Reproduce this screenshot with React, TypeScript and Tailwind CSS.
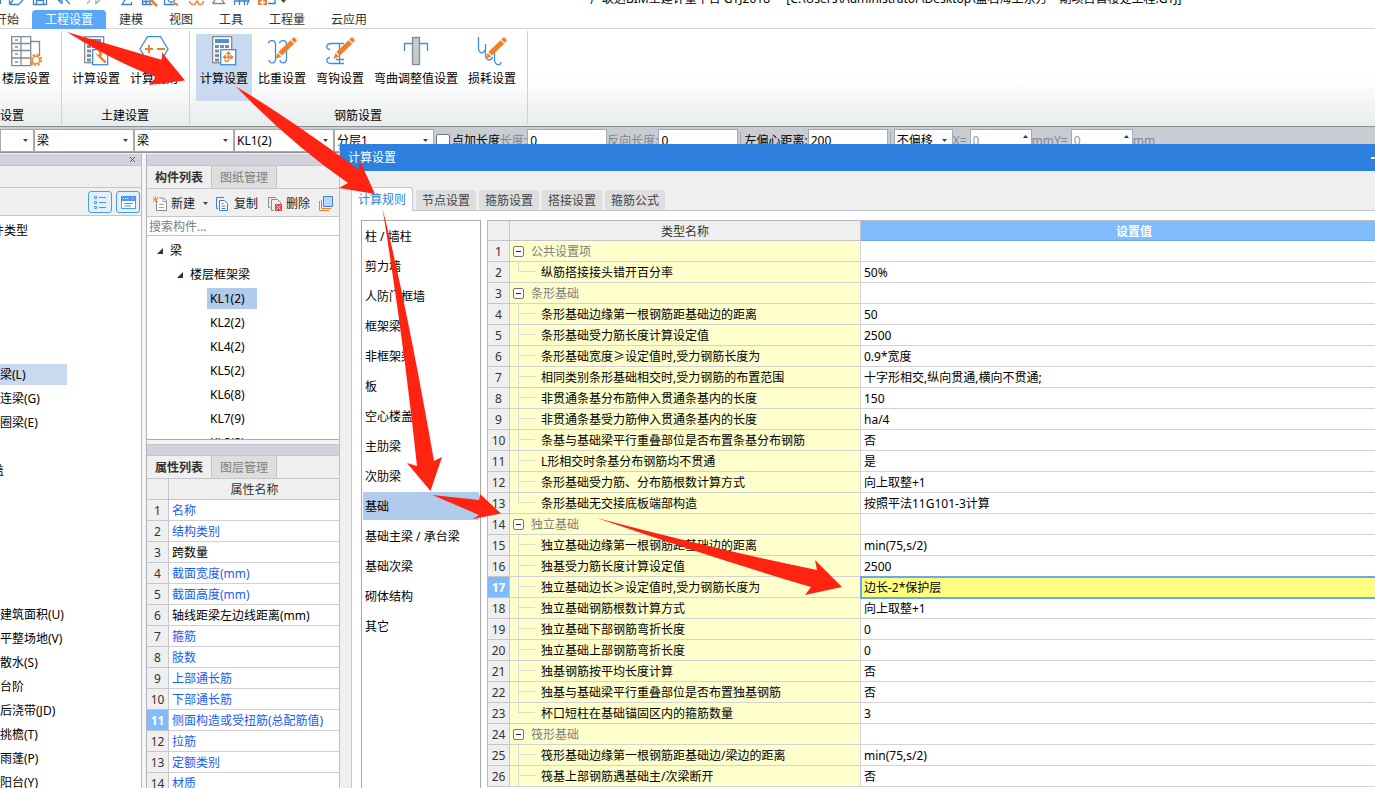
import type { ReactNode } from "react";
import { clsx } from "clsx";

type SettingRow = {
  name: string;
  value?: string;
  group?: boolean;
  last?: boolean;
};

const ribbonTabs = ["开始", "工程设置", "建模", "视图", "工具", "工程量", "云应用"];

const moduleTree = [
  "件类型", "", "", "", "", "", "梁(L)", "连梁(G)", "圈梁(E)", "", "盖", "", "", "", "", "",
  "建筑面积(U)", "平整场地(V)", "散水(S)", "台阶", "后浇带(JD)", "挑檐(T)", "雨蓬(P)", "阳台(Y)",
];

const components = ["KL1(2)", "KL2(2)", "KL4(2)", "KL5(2)", "KL6(8)", "KL7(9)", "KL8(2)"];

const properties = [
  { name: "名称", linked: true },
  { name: "结构类别", linked: true },
  { name: "跨数量", linked: false },
  { name: "截面宽度(mm)", linked: true },
  { name: "截面高度(mm)", linked: true },
  { name: "轴线距梁左边线距离(mm)", linked: false },
  { name: "箍筋", linked: true },
  { name: "肢数", linked: true },
  { name: "上部通长筋", linked: true },
  { name: "下部通长筋", linked: true },
  { name: "侧面构造或受扭筋(总配筋值)", linked: true },
  { name: "拉筋", linked: true },
  { name: "定额类别", linked: true },
  { name: "材质", linked: true },
];

const dialogTabs = ["节点设置", "箍筋设置", "搭接设置", "箍筋公式"];

const categories = [
  "柱 / 墙柱", "剪力墙", "人防门框墙", "框架梁", "非框架梁", "板", "空心楼盖板",
  "主肋梁", "次肋梁", "基础", "基础主梁 / 承台梁", "基础次梁", "砌体结构", "其它",
];

const settings: SettingRow[] = [
  { name: "公共设置项", group: true },
  { name: "纵筋搭接接头错开百分率", value: "50%", last: true },
  { name: "条形基础", group: true },
  { name: "条形基础边缘第一根钢筋距基础边的距离", value: "50" },
  { name: "条形基础受力筋长度计算设定值", value: "2500" },
  { name: "条形基础宽度≥设定值时,受力钢筋长度为", value: "0.9*宽度" },
  { name: "相同类别条形基础相交时,受力钢筋的布置范围", value: "十字形相交,纵向贯通,横向不贯通;" },
  { name: "非贯通条基分布筋伸入贯通条基内的长度", value: "150" },
  { name: "非贯通条基受力筋伸入贯通条基内的长度", value: "ha/4" },
  { name: "条基与基础梁平行重叠部位是否布置条基分布钢筋", value: "否" },
  { name: "L形相交时条基分布钢筋均不贯通", value: "是" },
  { name: "条形基础受力筋、分布筋根数计算方式", value: "向上取整+1" },
  { name: "条形基础无交接底板端部构造", value: "按照平法11G101-3计算", last: true },
  { name: "独立基础", group: true },
  { name: "独立基础边缘第一根钢筋距基础边的距离", value: "min(75,s/2)" },
  { name: "独基受力筋长度计算设定值", value: "2500" },
  { name: "独立基础边长≥设定值时,受力钢筋长度为", value: "边长-2*保护层" },
  { name: "独立基础钢筋根数计算方式", value: "向上取整+1" },
  { name: "独立基础下部钢筋弯折长度", value: "0" },
  { name: "独立基础上部钢筋弯折长度", value: "0" },
  { name: "独基钢筋按平均长度计算", value: "否" },
  { name: "独基与基础梁平行重叠部位是否布置独基钢筋", value: "否" },
  { name: "杯口短柱在基础锚固区内的箍筋数量", value: "3", last: true },
  { name: "筏形基础", group: true },
  { name: "筏形基础边缘第一根钢筋距基础边/梁边的距离", value: "min(75,s/2)" },
  { name: "筏基上部钢筋遇基础主/次梁断开", value: "否" },
];

function Icon({ children }: { children: ReactNode }) {
  return (
    <svg className="size-8 flex-none" viewBox="0 0 32 32" fill="none" strokeWidth="1.3" aria-hidden="true">
      {children}
    </svg>
  );
}

function Pencil() {
  return (
    <g fill="#ee7f2d">
      <path d="M9.5 24 11.5 18 15.2 21.6Z" />
      <path d="M12.3 17 24.5 5.2 28 8.8 16 20.6Z" />
      <path d="M25.4 4.4 28 2 31 5.2 28.7 7.9Z" />
    </g>
  );
}

function Calculator() {
  return (
    <>
      <rect x="4.7" y="1.7" width="19" height="26" fill="#fff" stroke="#7f8c94" />
      <rect x="7" y="4" width="14" height="4" fill="#4a90e2" />
      <path d="M7 11.5h14M7 16h14M7 20.5h14M7 25h14" stroke="#7f8c94" strokeWidth="3" strokeDasharray="4 1" />
      <rect x="12.7" y="14.7" width="15" height="15" fill="#fff" stroke="#3f8de3" />
    </>
  );
}

const floorIcon = (
  <Icon>
    <path d="M21 6.5h8.5V21M21 29h2" stroke="#7f8c94" />
    <path d="M1.7 1.7h19v29h-19zM1.7 8.5h19M1.7 15.5h19M1.7 23h19M11 1.7v29M5 5h3M5 12h3M5 19h3M5 27h3" stroke="#7f8c94" />
    <circle cx="26" cy="25" r="5.2" stroke="#ee8f35" strokeWidth="2" strokeDasharray="2.2 1.9" />
    <circle cx="26" cy="25" r="3.7" fill="#fff" stroke="#ee8f35" strokeWidth="1.6" />
  </Icon>
);

const wrenchIcon = (
  <Icon>
    <Calculator />
    <path d="m19.5 21.5 5.5 5.3" stroke="#ee7f2d" strokeWidth="2.4" strokeLinecap="round" />
    <path d="M15.5 17.5 18 20l1.5-1.2-1.7-2.6c3-1 5 1.7 3.8 4.2-1.3 2.4-5.2 1.4-6.1-2.9Z" fill="#ee7f2d" />
  </Icon>
);

const ruleIcon = (
  <Icon>
    <path d="M9.5 1.7h13L30 14l-7.5 12.5h-13L2 14Z" fill="#fff" stroke="#3f8de3" />
    <path d="M7 14h8M11 10v8M19 14h8" stroke="#ee7f2d" strokeWidth="2" />
  </Icon>
);

const rebarCalcIcon = (
  <Icon>
    <Calculator />
    <path d="M16 22.300h8.500M20.500 18v6.500c0 2.500-3.500 2.500-3.500.5M17.800 20.300l-2.300 2 2.300 2M22.500 20.300l2.300 2-2.300 2M18.500 19.300l2-2 2 2" stroke="#ee7f2d" strokeWidth="1.400" />
  </Icon>
);

const weightIcon = (
  <Icon>
    <path d="M2.500 8.500c0-4 7-4 7 .5v15c0 5-6.500 5-6.500 1M13.500 8.500c0-4 7-4 7 .5v15c0 5-6.500 5-6.500 1" stroke="#3f8de3" />
    <Pencil />
  </Icon>
);

const hookIcon = (
  <Icon>
    <path d="M20 8.500H7c-5.500 0-5.500 6-1 6M20 28.500H7c-5.500 0-5.500-6-1-6M15.500 9v19M12 24.500h8" stroke="#3f8de3" />
    <Pencil />
  </Icon>
);

const bendIcon = (
  <Icon>
    <rect x="12.500" y="2.500" width="7" height="27" fill="#c6cbcf" stroke="#7f8c94" />
    <path d="M4.500 16V8.500h8M19.500 8.500h8V16" stroke="#3f8de3" />
  </Icon>
);

const lossIcon = (
  <Icon>
    <path d="M2.500 2v11c0 6 6 6 6 2M9.500 9v11c0 6 6 6 7 2M18.500 17v7c0 7 6.500 7 6.500 3" stroke="#3f8de3" />
    <Pencil />
  </Icon>
);

function RibbonButton({ icon, label, active }: { icon: ReactNode; label: string; active?: boolean }) {
  return (
    <button type="button" className={clsx("flex h-[67px] flex-none flex-col items-center gap-1 px-1 pt-px leading-4", active && "bg-[#c9d9f0]")}>
      {icon}
      <span className="whitespace-nowrap">{label}</span>
    </button>
  );
}

function RibbonGroup({ label, className, labelClassName, children }: { label: string; className?: string; labelClassName?: string; children: ReactNode }) {
  return (
    <section className={clsx("flex h-[93px] flex-none flex-col justify-between border-r border-[#cfd2d4]", className)}>
      <div className="flex gap-0.5 pt-[3px]">{children}</div>
      <div className={clsx("leading-4", labelClassName ?? "text-center")}>{label}</div>
    </section>
  );
}

function Combo({ label, value, className }: { label: string; value: string; className: string }) {
  return (
    <div className={clsx("relative h-[23px] flex-none", className)}>
      <select aria-label={label} className="size-full appearance-none rounded-none border border-[#a6a9ad] bg-white pl-0.5 outline-none" defaultValue={value}>
        <option>{value}</option>
      </select>
      <svg className="pointer-events-none absolute top-2.5 right-1.5 h-[3px] w-[5px]" viewBox="0 0 5 3" aria-hidden="true">
        <path d="M0 0h5L2.500 3Z" fill="#444" />
      </svg>
    </div>
  );
}

function NumberField({ id, label, value, muted, spinner, className }: { id: string; label: string; value: string; muted?: boolean; spinner?: boolean; className: string }) {
  return (
    <div className="flex flex-none items-center">
      <label htmlFor={id} className={clsx("whitespace-nowrap", muted && "text-[#84878b]", spinner && "pr-[3px]")}>{label}</label>
      <div className={clsx("relative h-[23px]", className)}>
        <input id={id} defaultValue={value} className={clsx("size-full border border-[#a6a9ad] bg-white pl-0.5 outline-none", spinner && "text-[#999]")} />
        {spinner && (
          <svg className="absolute top-1.5 right-1 h-[3px] w-[5px]" viewBox="0 0 5 3" aria-hidden="true">
            <path d="M0 3h5L2.500 0Z" fill="#333" />
          </svg>
        )}
      </div>
    </div>
  );
}

function QuickAccess() {
  return (
    <svg className="h-2.5 w-[290px] flex-none" viewBox="0 0 290 10" fill="none" stroke="#3f7fc8" strokeWidth="1.300" aria-hidden="true">
      <path d="M.5 0v4M9.500 4.500h9L23 0M9.500 4.500V0M9.500 4.500 13 0" />
      <path d="M33.500 0v4.500h13V0M36.500 4V.5h7V4" />
      <path d="m58 0 4 3.500M62 4V0M70 4 66 0M58 0h3" />
      <path d="m87 3.500 3-3M100 0l-4 3.500V0" stroke="#a5a9ad" />
      <path d="m125 0-3 4.500h9.500V2" />
      <path d="M142.500 0v4.500h10M146 0v4M150 0v4M142 1.500h8M164.500 0v4.500h10M168 0c1 3 5 3 7 0" />
      <path d="m151 0 6 6M174 3l4 2" stroke="#ee7f2d" strokeWidth="2.500" />
      <path d="M190 1c-1 4 6 5 6 1 1-1 1-1 2 0 0 4 6 3 5-1" stroke="#ee9d62" strokeWidth="2" />
      <path d="M212.500 3.500h12L222 0M212.500 3.500 215 0" stroke="#7f8c94" />
      <path d="M234.500 5V1h15M239.500 0v5M244.500 0v5M249 0l-2 5" />
      <path d="M258 0h9v5h-9z" fill="#ee7f2d" stroke="none" />
      <path d="M260 2.500h5M262.500 0v5" stroke="#fff" />
      <path d="M268 3.500h7V0" />
      <path d="m281 0 2.500 3L286 0Z" fill="#444" stroke="none" />
    </svg>
  );
}

function Ribbon() {
  return (
    <header className="bg-white">
      <div className="flex h-2.5 items-end overflow-hidden">
        <QuickAccess />
        <div className="flex-1 pb-[3px] pl-[300px] leading-4 whitespace-nowrap">
          广联达BIM土建计量平台 GTJ2018&nbsp; -&nbsp; [C:\Users\Administrator\Desktop\蓝石海上东方一期项目售楼处工程.GTJ]
        </div>
      </div>
      <nav className="-ml-[18px] flex h-[19px] border-b border-[#d5d5d5] text-[#333]">
        {ribbonTabs.map((tab) => (
          <button
            key={tab}
            type="button"
            className={clsx("h-[19px] flex-none px-[13px] pt-px leading-[18px]", tab === "工程设置" && "rounded-t-sm bg-[#5aa7f7] text-white")}
          >
            {tab}
          </button>
        ))}
      </nav>
      <div className="flex h-[98px] border-b border-[#8b9093] bg-linear-to-b from-white from-50% to-[#e8ecec] pt-0.5">
        <RibbonGroup label="设置" className="w-[62px]" labelClassName="text-left">
          <div className="-ml-0.5 flex">
            <RibbonButton icon={floorIcon} label="楼层设置" />
          </div>
        </RibbonGroup>
        <RibbonGroup label="土建设置" className="pr-[7px] pl-1.5">
          <RibbonButton icon={wrenchIcon} label="计算设置" />
          <RibbonButton icon={ruleIcon} label="计算规则" />
        </RibbonGroup>
        <RibbonGroup label="钢筋设置" className="pr-[7px] pl-1.5">
          <RibbonButton icon={rebarCalcIcon} label="计算设置" active />
          <RibbonButton icon={weightIcon} label="比重设置" />
          <RibbonButton icon={hookIcon} label="弯钩设置" />
          <RibbonButton icon={bendIcon} label="弯曲调整值设置" />
          <RibbonButton icon={lossIcon} label="损耗设置" />
        </RibbonGroup>
      </div>
    </header>
  );
}

function OptionBar() {
  return (
    <div className="flex h-[26px] items-end border-b border-[#8e9095] bg-[#c9ccd1]">
      <Combo label="楼层" value="" className="w-[34px]" />
      <Combo label="类别" value="梁" className="w-[100px]" />
      <Combo label="构件类型" value="梁" className="w-[100px]" />
      <Combo label="构件" value="KL1(2)" className="w-[100px]" />
      <Combo label="分层" value="分层1" className="w-[100px]" />
      <label className="ml-0.5 flex h-[23px] flex-none items-center gap-0.5">
        <input type="checkbox" className="size-3.5 appearance-none rounded-xs border border-[#6f7276] bg-white" />
        点加长度
      </label>
      <NumberField id="len" label="长度:" value="0" muted className="w-20" />
      <NumberField id="reverse" label="反向长度:" value="0" muted className="w-20" />
      <span className="mr-[3px] ml-0.5 h-5 border-l border-[#a6a9ad]" />
      <NumberField id="offset" label="左偏心距离:" value="200" className="w-20" />
      <span className="mr-[3px] ml-0.5 h-5 border-l border-[#a6a9ad]" />
      <Combo label="偏移方式" value="不偏移" className="w-[59px]" />
      <NumberField id="x" label="X=" value="0" muted spinner className="w-[62px]" />
      <NumberField id="y" label="mmY=" value="0" muted spinner className="w-[62px]" />
      <span className="h-[23px] leading-[23px] text-[#84878b]">mm</span>
    </div>
  );
}

function ModulePanel() {
  return (
    <aside className="flex w-[142px] flex-none flex-col border-r border-[#b9babf] bg-white">
      <div className="flex h-3 flex-none items-center justify-end border-b border-[#c5c6cb] bg-[#d2d3da] pr-1.5">
        <button type="button" aria-label="关闭">
          <svg className="size-[5px]" viewBox="0 0 5 5" stroke="#555" aria-hidden="true">
            <path d="m0 0 5 5M5 0 0 5" />
          </svg>
        </button>
      </div>
      <div className="h-[22px] flex-none border-b border-[#c5c6cb] bg-[#efefef]" />
      <div className="flex h-7 flex-none items-center justify-end gap-1 border-b border-[#c5c6cb] bg-[#efefef] pr-px">
        <button type="button" aria-label="列表" className="rounded-[3px] border border-[#4a9bf0] bg-[#e3effd]">
          <svg className="h-5 w-[22px]" viewBox="0 0 22 20" fill="none" stroke="#4a9bf0" aria-hidden="true">
            <path d="M5.500 4.500h2v2h-2zM5.500 9.500h2v2h-2zM5.500 14.500h2v2h-2zM10 5.500h7M10 10.500h7M10 15.500h7" />
          </svg>
        </button>
        <button type="button" aria-label="面板" className="rounded-[3px] border border-[#4a9bf0] bg-[#e3effd]">
          <svg className="h-5 w-[22px]" viewBox="0 0 22 20" fill="none" stroke="#4a9bf0" aria-hidden="true">
            <path d="M4.500 4.500h14v12h-14z" fill="#fff" />
            <path d="M4 4h15v5H4z" fill="#4a9bf0" stroke="none" />
            <path d="M6 6.500h6M15 6.500h2" stroke="#fff" strokeDasharray="1 1" />
            <path d="M7 11.500h9M7 14h7" />
          </svg>
        </button>
      </div>
      <ul className="min-h-0 flex-1 overflow-hidden pt-0.5">
        {moduleTree.map((item, i) => (
          <li key={i} className="flex h-6 items-center leading-[22px]">
            <span className={clsx("h-5 whitespace-nowrap", (i === 0 || i === 10) && "-ml-2", item === "梁(L)" && "h-[21px] w-[67px] bg-[#c9d9f0]")}>{item}</span>
          </li>
        ))}
      </ul>
    </aside>
  );
}

function PanelTabs({ active, other }: { active: string; other: string }) {
  return (
    <div className="flex h-[23px] flex-none border-b border-[#c5c6cb] bg-[#efefef] text-[#333]">
      <button type="button" className="w-[65px] border-r border-[#c5c6cb] pt-0.5 font-semibold">{active}</button>
      <button type="button" className="w-[65px] border-r border-[#c5c6cb] bg-[#dedede] pt-0.5 text-[#808080]">{other}</button>
    </div>
  );
}

function Expander() {
  return (
    <svg className="size-1.5" viewBox="0 0 7 7" aria-hidden="true">
      <path d="M7 0v7H0Z" fill="#333" />
    </svg>
  );
}

function ComponentToolbar() {
  return (
    <div className="flex h-7 flex-none items-center overflow-hidden border-b border-[#c5c6cb] bg-[#efefef] pt-0.5 pl-1.5 whitespace-nowrap text-[#222]">
      <button type="button" className="flex flex-none items-center gap-1">
        <svg className="h-4 w-3.5" viewBox="0 0 14 16" fill="none" aria-hidden="true">
          <path d="M3.500 5v9.500h10V5l-3-3H6" fill="#fff" stroke="#7f8c94" />
          <path d="M10 2v3.500h3.500M6 8.500h5M6 11.500h5" stroke="#9aa4aa" />
          <path d="m0 1 5 5M5 1 0 6M2.500 0v6M0 3.500h5" stroke="#ee9d35" />
        </svg>
        新建
        <svg className="ml-1 h-[3px] w-[5px]" viewBox="0 0 5 3" aria-hidden="true">
          <path d="M0 0h5L2.500 3Z" fill="#444" />
        </svg>
      </button>
      <button type="button" className="ml-2 flex flex-none items-center gap-1.5">
        <svg className="h-4 w-3" viewBox="0 0 12 16" fill="none" stroke="#3f7fc8" aria-hidden="true">
          <path d="M8 1.500H.5v11H2" />
          <path d="M3.500 4.500h5l3 3v7h-8z" fill="#fff" />
          <path d="M5.500 7.500h2M5.500 10h4M5.500 12.500h4" />
        </svg>
        复制
      </button>
      <button type="button" className="ml-2.5 flex flex-none items-center gap-1">
        <svg className="h-4 w-3.5" viewBox="0 0 14 16" fill="none" stroke="#7f8c94" aria-hidden="true">
          <path d="M8 1.500H.5v10H2M6 14.500H3.500v-11h6l3 3V8" />
          <path d="M7 8h7v7H7z" fill="#d9484b" stroke="none" />
          <path d="m8.500 9.500 4 4M12.500 9.500l-4 4" stroke="#fff" />
        </svg>
        删除
      </button>
      <button type="button" aria-label="层间复制" className="ml-[9px] flex-none">
        <svg className="h-4 w-3.5" viewBox="0 0 14 16" fill="none" aria-hidden="true">
          <path d="M.5 5v9.500H10" stroke="#ee7f2d" />
          <path d="M2.500 4v8.500H12" stroke="#ee7f2d" />
          <path d="M4.500.5h9v10h-9z" fill="#b7d6f8" stroke="#3f7fe0" />
        </svg>
      </button>
    </div>
  );
}

function ComponentPanel() {
  return (
    <section className="ml-1 flex w-[194px] flex-none flex-col border-l border-[#b0b1b6]">
      <div className="h-3 flex-none border-b border-[#c5c6cb] bg-[#d2d3da]" />
      <PanelTabs active="构件列表" other="图纸管理" />
      <ComponentToolbar />
      <input type="search" aria-label="搜索构件" placeholder="搜索构件..." className="h-[19px] flex-none border-b border-[#c5c6cb] bg-white pl-0.5 outline-none placeholder:text-[#808080]" />
      <ul className="h-[204px] flex-none overflow-hidden border-b border-[#a6a9ad] bg-white pt-0.5 leading-6">
        <li className="flex h-6 items-center gap-[7px] pt-0.5 pl-2.5"><Expander />梁</li>
        <li className="flex h-6 items-center gap-[7px] pt-0.5 pl-[30px]"><Expander />楼层框架梁</li>
        {components.map((name) => (
          <li key={name} className="flex h-6 items-center pl-[60px]">
            <span className={clsx("h-[21px] w-[50px] pl-[3px] leading-[21px]", name === "KL1(2)" && "bg-[#b0cbec]")}>{name}</span>
          </li>
        ))}
      </ul>
      <div className="mt-1 h-3 flex-none border-y border-[#c5c6cb] bg-[#d2d3da]" />
      <PanelTabs active="属性列表" other="图层管理" />
      <div className="min-h-0 flex-1 overflow-hidden bg-white">
        <table className="w-full table-fixed border-separate border-spacing-0">
          <thead>
            <tr className="h-[21px] bg-[#efefef] leading-[18px] text-[#333]">
              <th className="w-[22px] border-r border-b border-[#c5c6cb] p-0" />
              <th className="border-b border-[#c5c6cb] p-0 pt-0.5 font-normal">属性名称</th>
            </tr>
          </thead>
          <tbody>
            {properties.map((property, i) => (
              <tr key={property.name} className="h-[21px] leading-[18px]">
                <td className={clsx("border-r border-b border-[#c5c6cb] p-0 pt-0.5 text-center", i === 10 ? "bg-[#80bbfb] font-bold text-white" : "bg-[#efefef] text-[#333]")}>{i + 1}</td>
                <td className={clsx("border-b border-[#d0d0d4] p-0 pt-0.5 pl-[3px] whitespace-nowrap", property.linked && "text-[#1a5cf0]")}>{property.name}</td>
              </tr>
            ))}
          </tbody>
        </table>
      </div>
    </section>
  );
}

function SettingName({ row }: { row: SettingRow }) {
  if (row.group) {
    return (
      <div className="flex h-5 items-center gap-[7px] pl-[3px] text-[#808080]">
        <button type="button" aria-label="折叠" className="grid size-[11px] place-items-center rounded-xs border border-[#777] bg-white">
          <span className="w-[5px] border-t border-[#222]" />
        </button>
        <span className="pt-0.5">{row.name}</span>
      </div>
    );
  }

  return (
    <div className="flex h-5 items-center gap-1.5 pl-2">
      <span className="flex h-5 w-[17px] flex-col">
        <span className="h-2.5 border-b border-l border-[#dcdccc]" />
        {!row.last && <span className="h-2.5 border-l border-[#dcdccc]" />}
      </span>
      <span className="pt-0.5 whitespace-nowrap">{row.name}</span>
    </div>
  );
}

function SettingsTable() {
  return (
    <table className="w-[calc(100%+4px)] table-fixed border-separate border-spacing-0 border-t border-l border-[#b9babf]">
      <thead>
        <tr className="h-5 bg-[#efefef] leading-[17px] text-[#333]">
          <th className="w-[22px] border-r border-b border-[#c5c6cb] p-0" />
          <th className="w-[351px] border-r border-b border-[#c5c6cb] p-0 pt-0.5 font-normal">类型名称</th>
          <th className="border-b border-[#6aaaf0] bg-[#80bbfb] p-0 pt-0.5 pl-7 font-bold text-white">设置值</th>
        </tr>
      </thead>
      <tbody>
        {settings.map((row, i) => {
          const selected = i === 16;
          return (
            <tr key={row.name} className="h-[21px] leading-[18px]">
              <td className={clsx("border-r border-b border-[#c5c6cb] p-0 pt-0.5 text-center", selected ? "bg-[#80bbfb] font-bold text-white" : "bg-[#efefef] text-[#333]")}>{i + 1}</td>
              <td className="border-r border-b border-[#d3d3d3] bg-[#ffffcc] p-0"><SettingName row={row} /></td>
              <td className={clsx("border-b border-[#d3d3d3] p-0 pt-0.5 pl-[3px]", selected && "bg-[#ffff80] outline-2 -outline-offset-1 outline-[#68a8e8]")}>{row.value}</td>
            </tr>
          );
        })}
      </tbody>
    </table>
  );
}

function SettingsDialog() {
  return (
    <div role="dialog" aria-labelledby="dialog-title" className="absolute top-36 right-0 bottom-0 left-[339px] flex flex-col overflow-hidden border-l border-[#bfc0c8] bg-[#efefef]">
      <div className="flex h-[27px] flex-none items-center justify-between bg-[#2d7fe0] pl-2 text-white">
        <h2 id="dialog-title">计算设置</h2>
        <button type="button" aria-label="最小化" className="w-1 border-t-2 border-white" />
      </div>
      <div className="flex min-h-0 flex-1 flex-col pl-[11px]">
        <div className="flex h-10 flex-none items-end gap-[3px] border-b border-[#c5c6cb] text-[#444]">
          <button type="button" className="-mb-px h-6 w-[62px] rounded-t-[3px] border border-b-0 border-[#c5c6cb] bg-white pt-px text-[#2d7fe0]">计算规则</button>
          {dialogTabs.map((tab) => (
            <button key={tab} type="button" className="h-5 rounded-t-[3px] bg-[#dedede] px-1.5 pt-0.5 leading-[18px]">{tab}</button>
          ))}
        </div>
        <div className="flex min-h-0 flex-1 gap-1.5 border-l border-[#c5c6cb] bg-white pt-[9px] pl-[9px]">
          <ul className="w-[120px] flex-none overflow-hidden border border-b-0 border-[#a9a9a9]">
            {categories.map((category) => (
              <li key={category} className={clsx("mx-px my-0.5 h-7 pt-0.5 pl-0.5 leading-[26px] whitespace-nowrap first:mt-px", category === "基础" && "bg-[#b0cbec]")}>{category}</li>
            ))}
          </ul>
          <div className="min-w-0 flex-1 overflow-hidden">
            <SettingsTable />
          </div>
        </div>
      </div>
    </div>
  );
}

function GuideArrows() {
  return (
    <svg className="pointer-events-none absolute inset-0 size-full" fill="#ff2312" aria-hidden="true">
      <path d="M67 32 162 60 162 52.500 185 80.500 149 85 156 77Q115 62 67 32Z" />
      <path d="M236 86.500Q290 119 359 170L360 161 375 194 339 188 348 183Q290 143 236 86.500Z" />
      <path d="M382.500 208.500Q406 301 434 461L442 457 430.500 491 407 463 417 466Q404 343 382.500 208.500Z" />
      <path d="M432.500 495 479 500 480 494 501 513.500 473 519 479 515Z" />
      <path d="M597 518Q710 548 817 570L815 560 842 587 805 595 811 587Q710 557 597 518Z" />
    </svg>
  );
}

export default function App() {
  return (
    <div className="relative flex h-screen flex-col overflow-hidden bg-[#f4f4f4] font-['Noto_Sans','Noto_Sans_CJK_SC',sans-serif] text-[12px] text-black">
      <Ribbon />
      <OptionBar />
      <main className="flex min-h-0 flex-1 pt-px">
        <ModulePanel />
        <ComponentPanel />
      </main>
      <SettingsDialog />
      <GuideArrows />
    </div>
  );
}
